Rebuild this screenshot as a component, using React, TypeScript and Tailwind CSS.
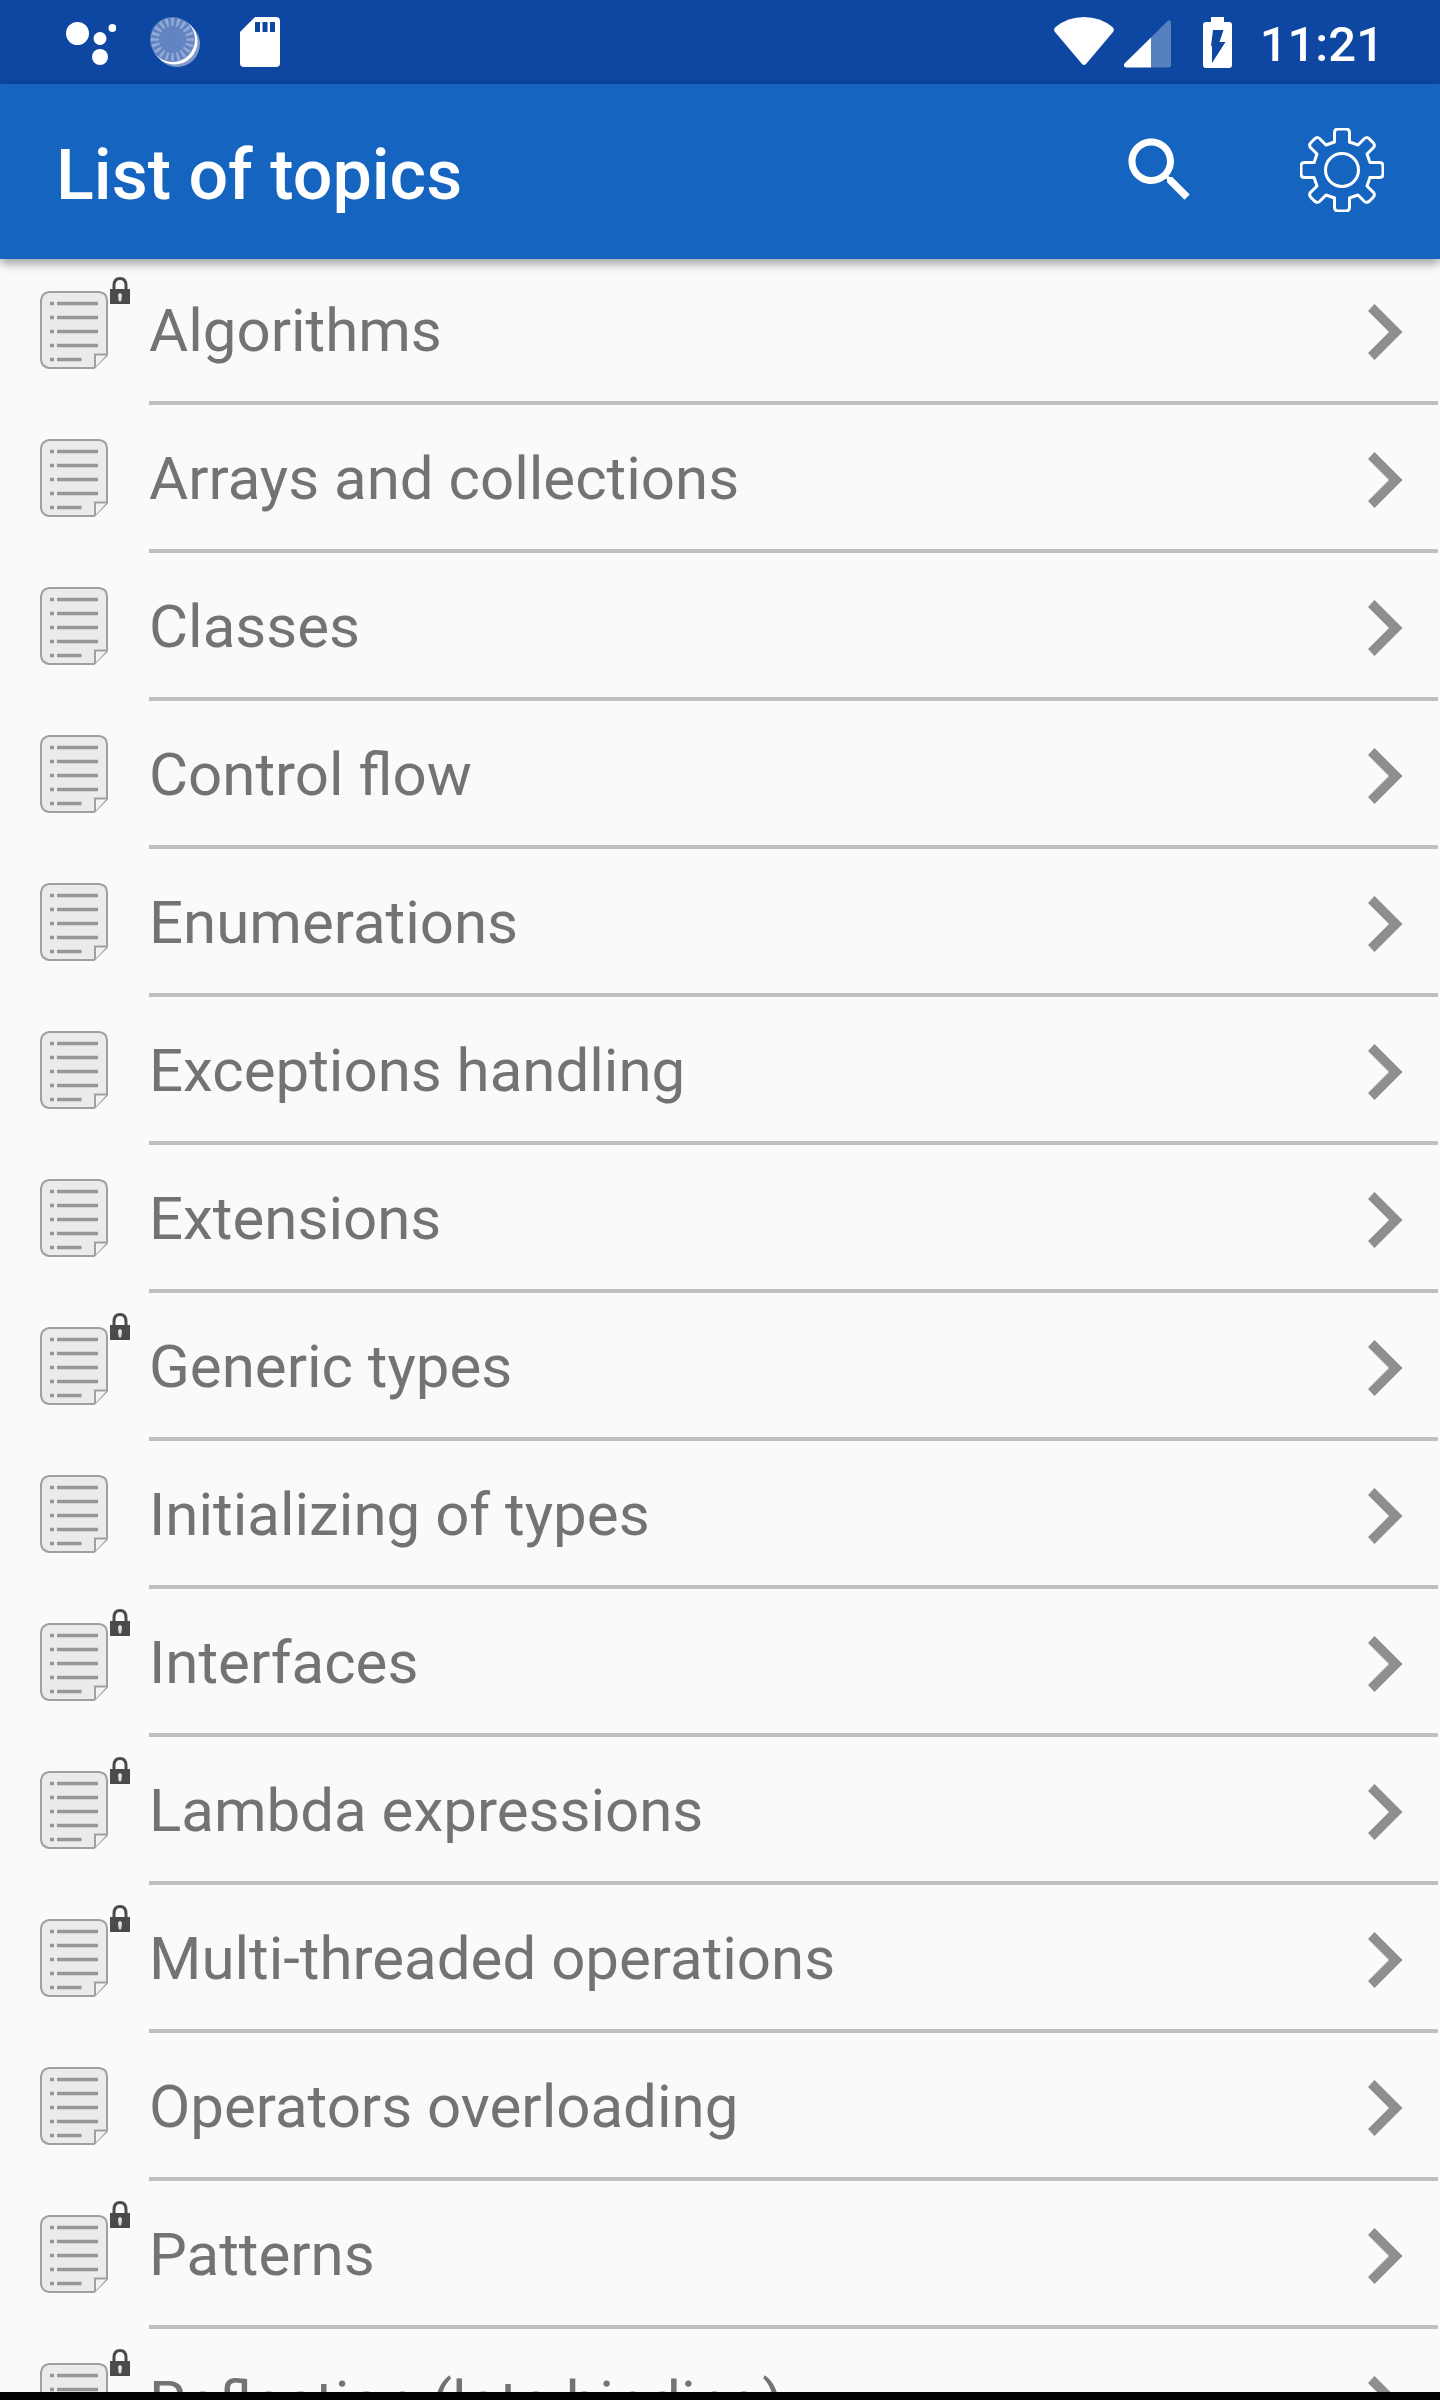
type Topic = {
  title: string;
  locked?: boolean;
};

const topics: Topic[] = [
  { title: "Algorithms", locked: true },
  { title: "Arrays and collections" },
  { title: "Classes" },
  { title: "Control flow" },
  { title: "Enumerations" },
  { title: "Exceptions handling" },
  { title: "Extensions" },
  { title: "Generic types", locked: true },
  { title: "Initializing of types" },
  { title: "Interfaces", locked: true },
  { title: "Lambda expressions", locked: true },
  { title: "Multi-threaded operations", locked: true },
  { title: "Operators overloading" },
  { title: "Patterns", locked: true },
  { title: "Reflection (late binding)", locked: true },
];

const AssistantIcon = () => (
  <svg width="50" height="50" viewBox="0 0 50 50" fill="#fff">
    <circle cx="11.5" cy="16.5" r="11.5" />
    <circle cx="34" cy="21.5" r="6.5" />
    <circle cx="34" cy="40" r="8" />
    <circle cx="46.5" cy="11" r="4" />
  </svg>
);

const SyncIcon = () => (
  <svg width="50" height="50" viewBox="0 0 50 50">
    <circle cx="27" cy="27" r="23" fill="#7f9bcd" />
    <circle cx="24.5" cy="24.5" r="23" fill="#fff" />
    <circle cx="22.5" cy="22.5" r="22.5" fill="#6284c2" />
    <circle
      cx="22.5"
      cy="22.5"
      r="17.5"
      fill="none"
      stroke="#93abd6"
      strokeWidth="8"
      strokeDasharray="2.5 3"
      strokeDashoffset="1.25"
      pathLength="110"
    />
  </svg>
);

const SdCardIcon = () => (
  <svg width="40" height="50" viewBox="0 0 40 50">
    <path d="M15 0H36Q40 0 40 4V46Q40 50 36 50H4Q0 50 0 46V15Z" fill="#fff" />
    <path d="M15 5h5v10h-5zM22.500 5h5v10h-5zM30 5h5v10h-5z" fill="#0d47a1" />
  </svg>
);

const WifiIcon = () => (
  <svg width="60" height="50" viewBox="0 0 60 50" fill="#fff">
    <path d="M1.500 10Q14 0 30 0T58.500 10Q61 12.500 59 15L32 47Q30 49 28 47L1 15Q-1 12.500 1.500 10Z" />
  </svg>
);

const SignalIcon = () => (
  <svg width="47" height="48" viewBox="0 0 47 48">
    <path d="M27 17.500L43.500 1Q47-1 47 3V44.500Q47 47.500 44 47.500H27Z" fill="#5680bd" />
    <path d="M27 17.500V47.500H2.500Q-1.500 47 .5 43.500Z" fill="#fff" />
  </svg>
);

const BatteryIcon = () => (
  <svg width="29" height="51" viewBox="0 0 29 51">
    <path d="M8 0H21V5H26Q29 5 29 8V48Q29 51 26 51H3Q0 51 0 48V8Q0 5 3 5H8Z" fill="#fff" />
    <path d="M10 13H20.500L16.500 25H22.500L9 46V29H8Z" fill="#0d47a1" />
  </svg>
);

const SearchIcon = () => (
  <svg width="84" height="84" viewBox="0 0 24 24" fill="#fff">
    <path d="M15.5 14h-.79l-.28-.27C15.41 12.59 16 11.11 16 9.5 16 5.91 13.09 3 9.5 3S3 5.91 3 9.5 5.91 16 9.5 16c1.61 0 3.09-.59 4.23-1.57l.27.28v.79l5 4.99L20.49 19l-4.99-5zm-6 0C7.01 14 5 11.99 5 9.5S7.01 5 9.5 5 14 7.01 14 9.5 11.99 14 9.5 14z" />
  </svg>
);

// One quarter of the outline, drawn four times around the centre
const gearQuarter =
  "M7.500 -28L16 -25L21.500 -30.500Q24 -34 27.500 -31L31 -27.500Q34 -24 30.500 -21.500L25 -16L28 -7.500H37.500Q41 -7.500 41 -4V4Q41 7.500 37.500 7.500H28";

const GearIcon = () => (
  <svg
    width="84"
    height="84"
    viewBox="-42 -42 84 84"
    fill="none"
    stroke="#fff"
    strokeWidth="3"
    strokeLinejoin="round"
    strokeLinecap="round"
  >
    {[0, 90, 180, 270].map((angle) => (
      <path key={angle} d={gearQuarter} transform={`rotate(${angle})`} />
    ))}
    <circle r="16.500" />
  </svg>
);

const DocumentIcon = () => (
  <svg width="68" height="78" viewBox="0 0 68 78">
    <path
      d="M9 1H59Q67 2 67 9V64L54 77H9Q2 76 1 69V9Q2 2 9 1Z"
      fill="#ebebeb"
      stroke="#a0a0a0"
      strokeWidth="2"
      strokeLinejoin="round"
    />
    <path d="M55 76.500V63.500H67" fill="#f3f3f3" stroke="#a0a0a0" strokeWidth="2" />
    <path
      d="M17 12.500H58M17 26.500H58M17 40.500H58M17 54.500H58M17 68.500H41.500M10 12.500h4M10 26.500h4M10 40.500h4M10 54.500h4M10 68.500h4"
      stroke="#979797"
      strokeWidth="3.500"
    />
  </svg>
);

const LockIcon = () => (
  <svg className="absolute -top-3.5 left-[70px]" width="20" height="27" viewBox="0 0 20 27">
    <path d="M4 12V8.500Q4 1.500 10 1.500T16 8.500V12" fill="none" stroke="#4a4a4a" strokeWidth="3" />
    <rect y="12" width="20" height="15" fill="#4a4a4a" />
    <path d="M8.500 17.500Q10 15.500 11.500 17.500L10.800 24H9.200Z" fill="#ddd" stroke="#ddd" />
  </svg>
);

const ChevronIcon = () => (
  <svg width="35" height="56" viewBox="0 0 35 56" fill="#8e8e8e">
    <path d="M6.500 0L34.500 28L6.500 56L0 49L21 28L0 7Z" />
  </svg>
);

const StatusBar = () => (
  <div className="flex h-[84px] shrink-0 items-center bg-[#0d47a1] pr-14 pl-[66px]">
    <div className="flex items-center gap-[34px]">
      <AssistantIcon />
      <SyncIcon />
      <div className="ml-1.5">
        <SdCardIcon />
      </div>
    </div>
    <div className="ml-auto flex items-center">
      <WifiIcon />
      <div className="mr-8 ml-2.5 pt-1">
        <SignalIcon />
      </div>
      <BatteryIcon />
      <span className="ml-7 pt-1 text-[49px] leading-none font-medium text-white">11:21</span>
    </div>
  </div>
);

const Toolbar = () => (
  <header className="relative z-10 flex h-[175px] shrink-0 items-center bg-[#1565c0] px-14 shadow-[0_4px_10px_rgba(0,0,0,0.4)]">
    <h1 className="pt-1.5 text-[70px] leading-none font-medium text-white">List of topics</h1>
    <div className="ml-auto flex items-center gap-[98px] pb-1">
      <button type="button" aria-label="Search">
        <SearchIcon />
      </button>
      <button type="button" aria-label="Settings">
        <GearIcon />
      </button>
    </div>
  </header>
);

const TopicRow = ({ title, locked }: Topic) => (
  <li>
    <a href="#" className="flex h-[148px] items-stretch pl-10">
      <div className="relative w-[109px] shrink-0 pt-[34px]">
        <div className="relative">
          <DocumentIcon />
          {locked && <LockIcon />}
        </div>
      </div>
      <div className="mr-0.5 flex flex-1 items-center justify-between border-b-4 border-[#bfbfbf] pt-1 pr-[35px]">
        <span className="text-[60px] leading-none whitespace-nowrap text-[#737373]">{title}</span>
        <div className="pt-0.5">
          <ChevronIcon />
        </div>
      </div>
    </a>
  </li>
);

export default function App() {
  return (
    <div className="flex h-screen flex-col bg-[#fafafa] font-['Roboto',sans-serif]">
      <StatusBar />
      <Toolbar />
      <main className="-mt-0.5 min-h-0 flex-1 overflow-hidden">
        <ul>
          {topics.map((topic) => (
            <TopicRow key={topic.title} {...topic} />
          ))}
        </ul>
      </main>
      <div className="h-2 shrink-0 bg-black" />
    </div>
  );
}
